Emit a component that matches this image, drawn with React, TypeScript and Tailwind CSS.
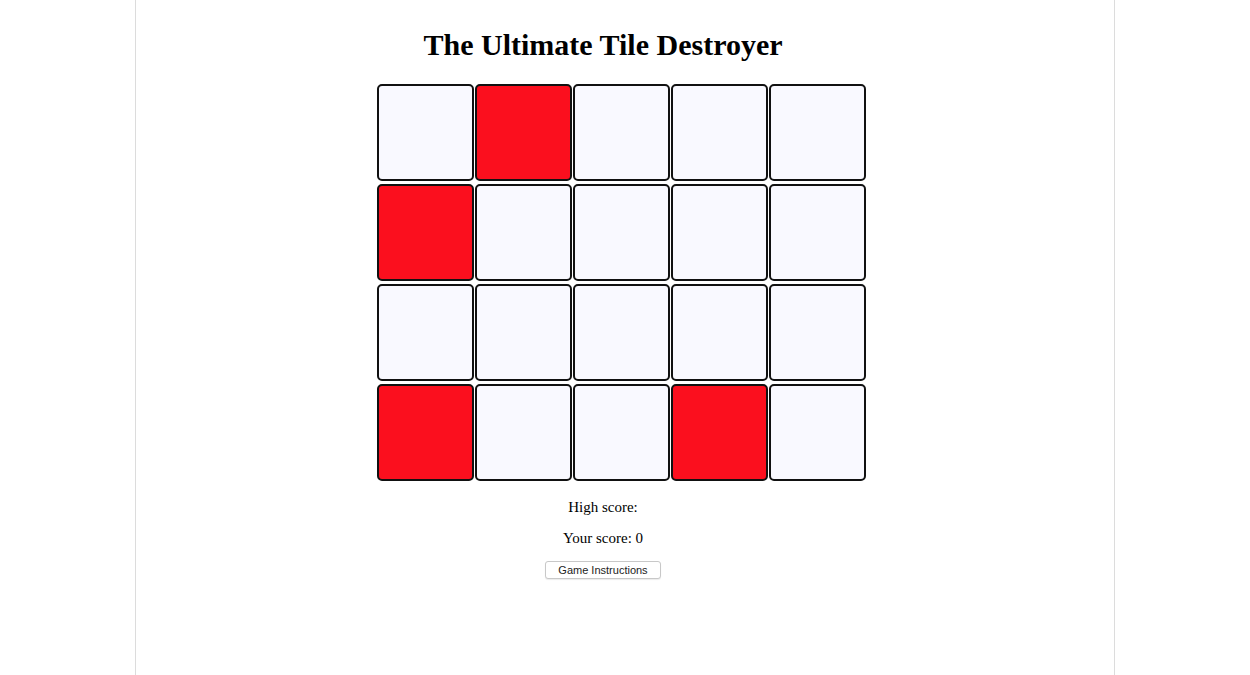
const RED = new Set([1, 5, 15, 18]);

export default function App() {
  const tiles = Array.from({ length: 20 }, (_, i) => i);

  return (
    <div className="min-h-[675px] bg-white font-['Liberation_Serif',serif] text-black">
      <div className="mx-auto w-[980px] min-h-[675px] border-x border-[#dcdcdc]">
        <div className="w-[934px] flex flex-col items-center">
          <h1 className="mt-[27px] text-[30px] leading-[36px] font-bold">The Ultimate Tile Destroyer</h1>
          <div className="mt-[21px] ml-[37px] grid grid-cols-[repeat(5,97px)] gap-x-px gap-y-[3px]">
            {tiles.map((i) => (
              <div
                key={i}
                className={`h-[97px] rounded-[5px] border-2 border-[#111] ${RED.has(i) ? 'bg-[#fb0f1e]' : 'bg-[#f9f9ff]'}`}
              />
            ))}
          </div>
          <p className="mt-[17px] text-[15px] leading-[18px]">High score: </p>
          <p className="mt-[13px] text-[15px] leading-[18px]">Your score: 0</p>
          <button className="mt-[14px] w-[116px] h-[18px] rounded-[3px] border border-[#c8c8c8] bg-white font-['Liberation_Sans',sans-serif] text-[11px] leading-[16px] text-[#222] shadow-[0_1px_1px_rgba(0,0,0,0.08)]">
            Game Instructions
          </button>
        </div>
      </div>
    </div>
  );
}
